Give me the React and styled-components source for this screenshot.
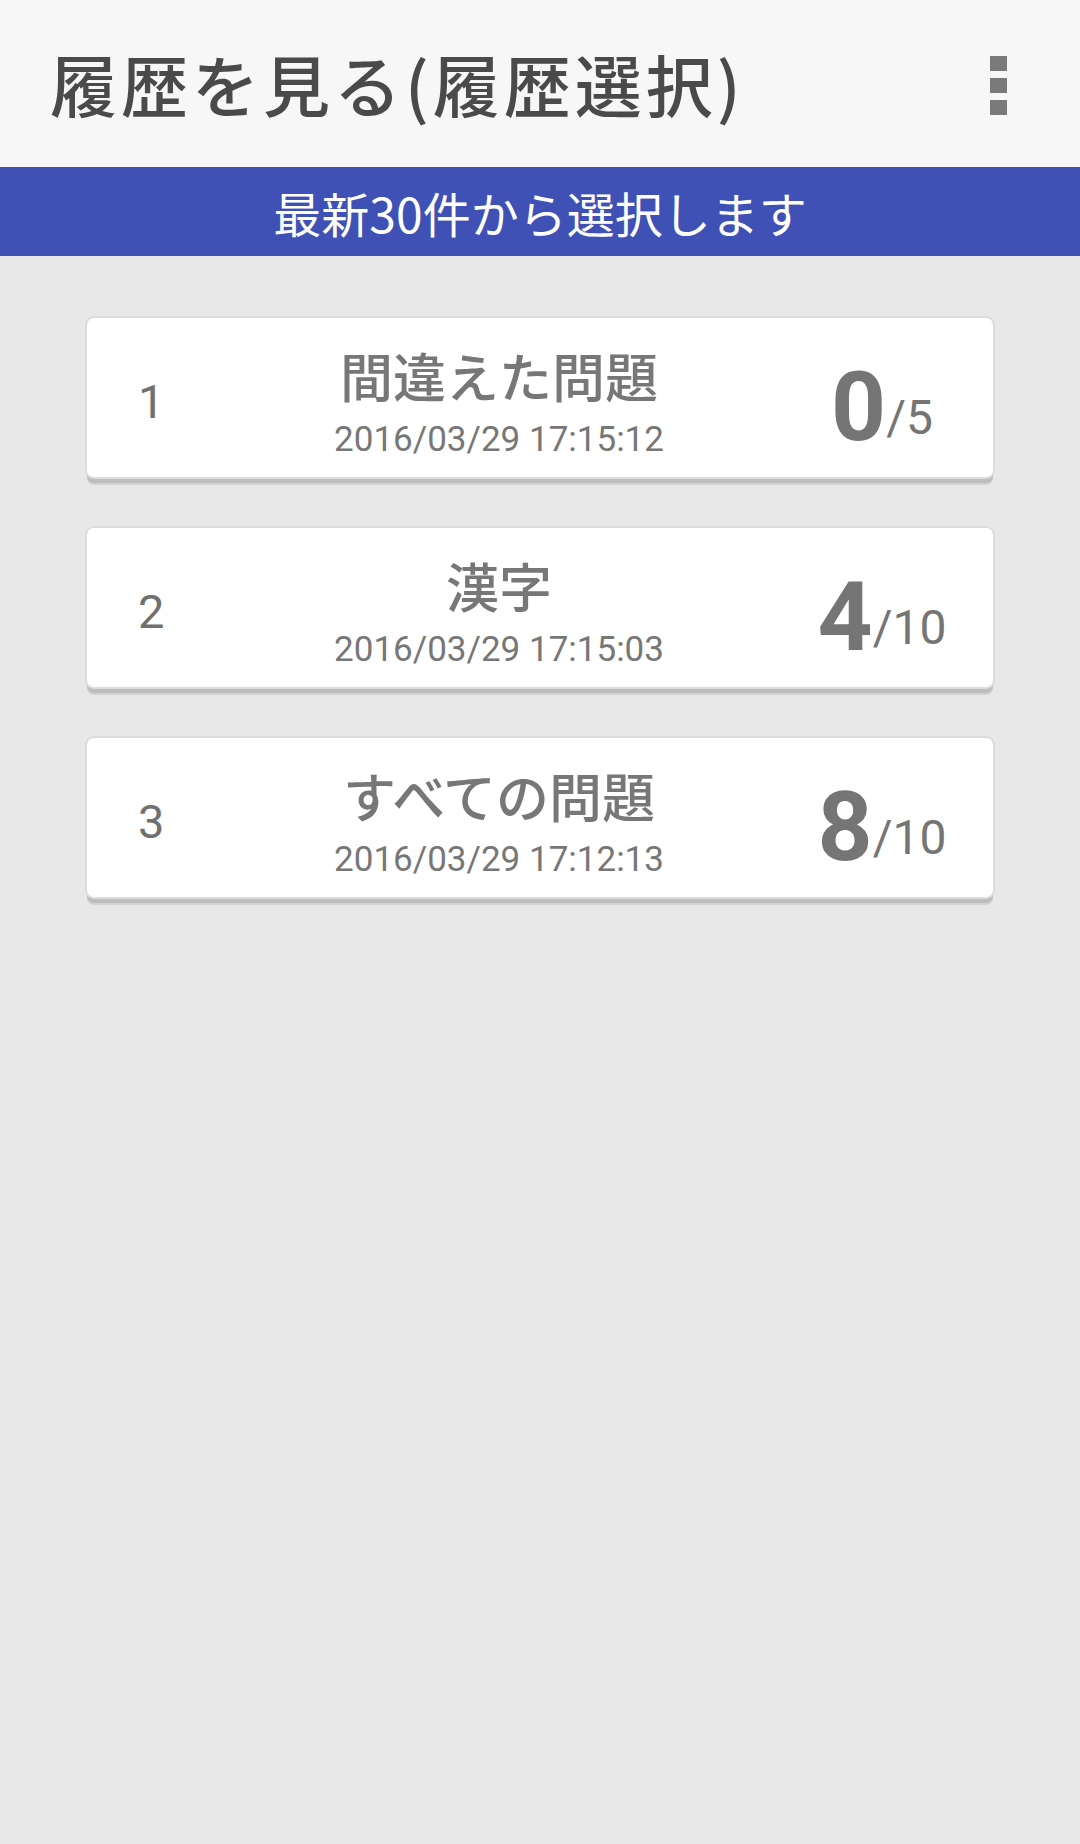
import styled, { createGlobalStyle } from 'styled-components';

const GlobalStyle = createGlobalStyle`
  html, body {
    margin: 0;
    padding: 0;
    background: #e8e8e8;
  }
  body {
    font-family: "Noto Sans CJK JP", "Noto Sans", sans-serif;
  }
`;

const Page = styled.div`
  min-height: 1844px;
  background: #e8e8e8;
`;
const Toolbar = styled.header`
  height: 167px;
  background: #f7f7f7;
  display: flex;
  align-items: center;
  justify-content: space-between;
  padding: 0 73px 0 50px;
  box-sizing: border-box;
`;
const Title = styled.h1`
  margin: 0;
  font-size: 67px;
  line-height: 1.2;
  font-weight: 500;
  color: #4a4a4a;
  letter-spacing: 4px;
`;
const MenuButton = styled.div`
  display: flex;
  flex-direction: column;
  gap: 7px;
  margin-top: 4px;
`;
const MenuDot = styled.span`
  display: block;
  width: 17px;
  height: 15px;
  background: #7a7a7a;
`;
const Banner = styled.div`
  height: 89px;
  background: #3f51b5;
  color: #fff;
  display: flex;
  align-items: center;
  justify-content: center;
  font-size: 48px;
  line-height: 1;
`;
const List = styled.div`
  display: flex;
  flex-direction: column;
  gap: 51px;
  padding: 62px 87px 0;
`;
const Card = styled.div`
  height: 159px;
  background: #fff;
  border-radius: 7px;
  box-shadow: 0 0 0 2px #dcdcdc, 0 6px 0 0 #bdbdbd, 0 8px 1px 0 #d2d2d2;
  display: grid;
  grid-template-columns: 130px 564px 1fr;
  align-items: start;
  color: #777;
`;
const Index = styled.div`
  margin-top: 60px;
  padding-left: 51px;
  font-family: Roboto, "Liberation Sans", sans-serif;
  font-size: 47px;
  line-height: 1;
  color: #707070;
`;
const Info = styled.div`
  margin-top: 27px;
  display: flex;
  flex-direction: column;
  align-items: center;
`;
const Name = styled.div`
  font-size: 53px;
  line-height: 60px;
  font-weight: 500;
  color: #777;
`;
const Stamp = styled.div`
  margin-top: 15px;
  font-family: Roboto, "Liberation Sans", sans-serif;
  font-size: 35px;
  line-height: 40px;
  color: #777;
`;
const Score = styled.div`
  margin-top: 41px;
  padding-right: 10px;
  text-align: center;
  font-family: Roboto, "Liberation Sans", sans-serif;
  line-height: 1;
  white-space: nowrap;
  color: #757575;
`;
const Correct = styled.span`
  font-size: 96px;
  font-weight: 700;
`;
const Total = styled.span`
  font-size: 48px;
  vertical-align: 6px;
`;

const history = [
  { id: 1, name: '間違えた問題', date: '2016/03/29 17:15:12', correct: 0, total: 5 },
  { id: 2, name: '漢字', date: '2016/03/29 17:15:03', correct: 4, total: 10 },
  { id: 3, name: 'すべての問題', date: '2016/03/29 17:12:13', correct: 8, total: 10 }
];

function App() {
  return (
    <Page>
      <GlobalStyle />
      <Toolbar>
        <Title>履歴を見る(履歴選択)</Title>
        <MenuButton>
          <MenuDot />
          <MenuDot />
          <MenuDot />
        </MenuButton>
      </Toolbar>
      <Banner>最新30件から選択します</Banner>
      <List>
        {
          history.map((item) => (
            <Card key={item.id}>
              <Index>{ item.id }</Index>
              <Info>
                <Name>{ item.name }</Name>
                <Stamp>{ item.date }</Stamp>
              </Info>
              <Score>
                <Correct>{ item.correct }</Correct>
                <Total>/{ item.total }</Total>
              </Score>
            </Card>
          ))
        }
      </List>
    </Page>
  );
}

export default App;
